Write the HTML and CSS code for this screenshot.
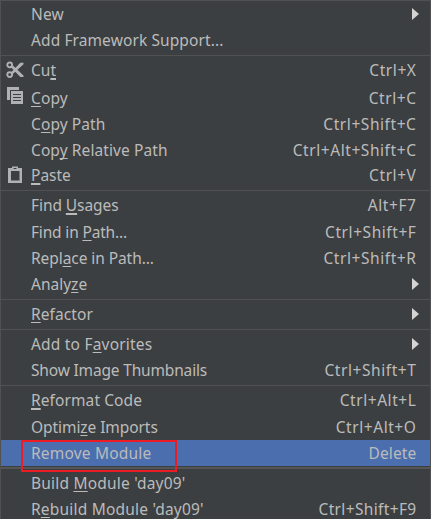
FILE: index.html
```html
<!DOCTYPE html>
<html lang="en">
<head>
<meta charset="utf-8">
<title>Context menu</title>
<link rel="stylesheet" href="styles.css">
</head>
<body>
<div class="menu">
  <div class="item"><span class="label wide-1">New</span><svg class="arrow" viewBox="0 0 7 12"><path d="M0 0L7 6L0 12Z"/></svg></div>
  <div class="item"><span class="label wide-1">Add Framework Support...</span></div>
  <div class="sep"></div>
  <div class="item tall">
    <svg class="icon cut" viewBox="0 0 18 18"><g fill="none" stroke="#afb1b3" stroke-width="1.9"><circle cx="3.7" cy="3.9" r="2.4"/><circle cx="3.7" cy="13.6" r="2.4"/></g><path fill="#afb1b3" d="M5.200 6.400L6.900 4.600L17.500 14.600V16H14.300ZM5.200 11.200L14.300 1.800H17.500V3.200L6.900 13.100Z"/></svg>
    <span class="label">Cu<u class="thick">t</u></span><span class="keys">Ctrl+X</span></div>
  <div class="item low">
    <svg class="icon copy" viewBox="0 0 18 18"><path fill="#afb1b3" d="M0 1H12V4H3V14H0ZM4 5H16V18H4Z"/><path stroke="#3c3f41" d="M6 8.500H14M6 11.500H14M6 14.500H14"/></svg>
    <span class="label wide-1"><u>C</u>opy</span><span class="keys">Ctrl+C</span></div>
  <div class="item low"><span class="label wide-1">C<u>o</u>py Path</span><span class="keys">Ctrl+Shift+C</span></div>
  <div class="item low"><span class="label wide-1">Cop<u>y</u> Relative Path</span><span class="keys">Ctrl+Alt+Shift+C</span></div>
  <div class="item">
    <svg class="icon paste" viewBox="0 0 18 18"><path fill="#afb1b3" fill-rule="evenodd" d="M2 2H6V0.500H12V2H16V17H2ZM5 5V14.500H13.500V5Z"/><path fill="#3c3f41" d="M7.500 2H10.500V3H7.500Z"/></svg>
    <span class="label"><u class="thick">P</u>aste</span><span class="keys">Ctrl+V</span></div>
  <div class="sep"></div>
  <div class="item tall"><span class="label tight-1">Find <u class="thick">U</u>sages</span><span class="keys">Alt+F7</span></div>
  <div class="item"><span class="label tight-2">Find in <u>P</u>ath...</span><span class="keys">Ctrl+Shift+F</span></div>
  <div class="item"><span class="label tight-1">Repl<u>a</u>ce in Path...</span><span class="keys">Ctrl+Shift+R</span></div>
  <div class="item"><span class="label">Analy<u>z</u>e</span><svg class="arrow" viewBox="0 0 7 12"><path d="M0 0L7 6L0 12Z"/></svg></div>
  <div class="sep"></div>
  <div class="item"><span class="label wide-1"><u>R</u>efactor</span><svg class="arrow" viewBox="0 0 7 12"><path d="M0 0L7 6L0 12Z"/></svg></div>
  <div class="sep"></div>
  <div class="item"><span class="label wide-2">Add to F<u>a</u>vorites</span><svg class="arrow" viewBox="0 0 7 12"><path d="M0 0L7 6L0 12Z"/></svg></div>
  <div class="item"><span class="label tight-2">Show Image Thumbnails</span><span class="keys">Ctrl+Shift+T</span></div>
  <div class="sep"></div>
  <div class="item tall"><span class="label wide-1"><u class="thick">R</u>eformat Code</span><span class="keys">Ctrl+Alt+L</span></div>
  <div class="item"><span class="label tight-1">Optimi<u>z</u>e Imports</span><span class="keys">Ctrl+Alt+O</span></div>
  <div class="item selected"><span class="label wide-2">Remove Module</span><span class="keys plain">Delete</span></div>
  <div class="sep heavy"></div>
  <div class="item"><span class="label wide-2">Build <u>M</u>odule 'day09'</span></div>
  <div class="item last"><span class="label wide-2">R<u>e</u>build Module 'day09'</span><span class="keys close">Ctrl+Shift+F9</span></div>
  <div class="callout"></div>
</div>
</body>
</html>
```

FILE: styles.css
```css
body { margin: 0; overflow: hidden; background: #3c3f41; }
.menu {
  position: relative;
  box-sizing: border-box;
  height: 519px;
  overflow: hidden;
  border: 1px solid #515151;
  border-bottom: 0;
  background: #3c3f41;
  color: #bbb;
  font: 15.5px/26px "Noto Sans", sans-serif;
}
.item {
  position: relative;
  display: flex;
  justify-content: space-between;
  height: 26px;
  padding: 0 14px 0 30px;
  white-space: pre;
}
.tall { height: 27px; }
.low { line-height: 28px; }
.last { height: 23px; }
.selected { background: #4b6eaf; }
.sep { height: 4px; background: linear-gradient(#515151, #515151) 0 2px / 100% 1px no-repeat; }
.heavy { background: linear-gradient(#555, #555) 0 1px / 100% 2px no-repeat; }
.wide-1 { letter-spacing: 0.1px; }
.wide-2 { letter-spacing: 0.2px; }
.tight-1 { letter-spacing: -0.07px; }
.tight-2 { letter-spacing: -0.17px; }
.keys { letter-spacing: 0.57px; margin-right: -0.5px; }
.close { letter-spacing: 0.35px; }
.plain { letter-spacing: 0.15px; }
u {
  text-decoration: underline 1px;
  text-underline-offset: 2px;
  text-decoration-skip-ink: none;
}
.thick { text-decoration-thickness: 2px; }
.icon { position: absolute; left: 5px; top: 4px; width: 18px; height: 18px; }
.copy { left: 6px; top: 2px; }
.arrow { width: 7px; height: 12px; margin: 7px -3px 0 0; fill: #d4d4d4; }
.callout {
  position: absolute;
  left: 20px;
  top: 439px;
  box-sizing: border-box;
  width: 156px;
  height: 32px;
  border: 2px solid #ed1c24;
}
```
